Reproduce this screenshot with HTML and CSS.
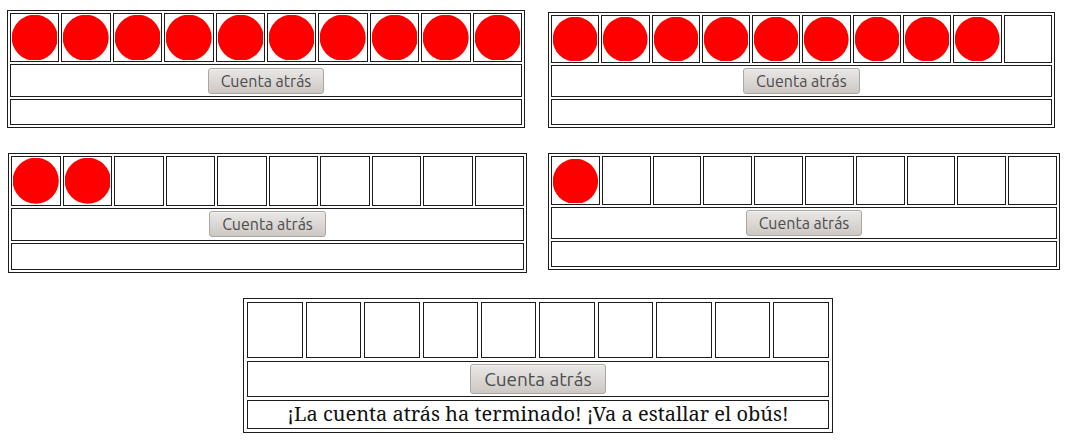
FILE: index.html
```html
<!DOCTYPE html>
<html lang="es">
<head>
<meta charset="utf-8">
<title>Cuenta atrás</title>
<link rel="stylesheet" href="styles.css">
</head>
<body>
<main class="boards"></main>
<script src="boards.js"></script>
</body>
</html>
```
FILE: styles.css
```css
* {
  box-sizing: border-box;
}

body {
  margin: 0;
  padding: 10px 8px 8px;
  background: #fff;
  color: #111;
  font-family: "Droid Serif", "Noto Serif", "DejaVu Serif", serif;
}

.boards {
  display: grid;
  grid-template-columns: 519fr 512fr;
  column-gap: 21px;
  row-gap: 25px;
  align-items: start;
}

.board {
  width: 100%;
  table-layout: fixed;
  border: 1px solid #1c1c1c;
  border-collapse: separate;
  border-spacing: 2px;
}

.board td {
  border: 1px solid #1c1c1c;
  padding: 1px;
  text-align: center;
  vertical-align: middle;
}

.light {
  height: 49px;
}

.dot {
  display: block;
  width: 100%;
  fill: #f00;
}

.control {
  height: 33px;
}

.message {
  height: 26px;
  font-size: 20px;
  line-height: 24px;
}

.button {
  display: block;
  margin: 0 auto;
  height: 26px;
  padding: 0 12px;
  border: 1px solid #aaa6a1;
  border-radius: 3px;
  background: linear-gradient(#e9e7e6, #cdc8c4);
  box-shadow: inset 0 1px #f3f2f1;
  color: #4c4c4c;
  font-family: Ubuntu, "Noto Sans", sans-serif;
  font-size: 16px;
  line-height: 24px;
}

.board-full {
  margin-left: -1px;
  width: calc(100% - 1px);
}

.board-nine {
  width: 99%;
  align-self: end;
}

.board-nine .light {
  height: 48px;
}

.board-nine .control,
.board-one .control {
  height: 32px;
}

.board-two .message {
  height: 27px;
}

.board-done {
  grid-column: 1 / -1;
  justify-self: center;
  width: 56%;
  margin-left: 8px;
  border-spacing: 3px;
}

.board-done .light {
  height: 56px;
}

.board-done .control {
  height: 36px;
}

.board-done .message {
  height: 29px;
}

.board-done .button {
  height: 30px;
  padding: 0 13px;
  font-size: 19px;
  line-height: 28px;
}
```
FILE: boards.js
```
const LIGHTS = 10;
const states = [
  { name: "full", left: 10, message: "" },
  { name: "nine", left: 9, message: "" },
  { name: "two", left: 2, message: "" },
  { name: "one", left: 1, message: "" },
  { name: "done", left: 0, message: "¡La cuenta atrás ha terminado! ¡Va a estallar el obús!" }
];
const dot = '<svg class="dot" viewBox="0 0 46 46" aria-hidden="true"><circle cx="23" cy="23" r="23.3"/></svg>';

document.querySelector(".boards").innerHTML = states.map(({ name, left, message }) => {
  const lights = Array.from({ length: LIGHTS }, (_, i) =>
    `<td class="light">${i < left ? dot : ""}</td>`).join("");
  return `<table class="board board-${name}"><tbody>
    <tr>${lights}</tr>
    <tr><td class="control" colspan="${LIGHTS}"><button class="button" type="button">Cuenta atrás</button></td></tr>
    <tr><td class="message" colspan="${LIGHTS}">${message}</td></tr>
  </tbody></table>`;
}).join("");
```
